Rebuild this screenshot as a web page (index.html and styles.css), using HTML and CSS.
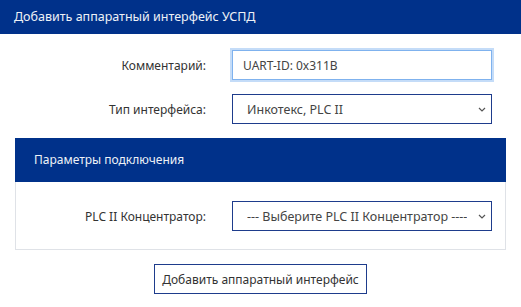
FILE: index.html
```html
<!DOCTYPE html>
<html lang="ru">
<head>
  <meta charset="UTF-8">
  <meta name="viewport" content="width=device-width, initial-scale=1.0">
  <title>Добавить аппаратный интерфейс УСПД</title>
  <link rel="stylesheet" href="styles.css">
</head>
<body>
  <header class="page-header">Добавить аппаратный интерфейс УСПД</header>

  <form class="form">
    <div class="row">
      <label for="comment">Комментарий:</label>
      <input id="comment" class="field field-focus" value="UART-ID: 0x311B">
    </div>

    <div class="row">
      <label for="type">Тип интерфейса:</label>
      <div class="select-wrap">
        <select id="type" class="field">
          <option>Инкотекс, PLC II</option>
        </select>
        <svg class="chevron" width="8" height="5" viewBox="0 0 8 5"><path d="M1 1l3 3 3-3" fill="none" stroke="#555" stroke-width="1.2"/></svg>
      </div>
    </div>

    <div class="panel">
      <div class="panel-title">Параметры подключения</div>
      <div class="panel-body">
        <div class="row row-panel">
          <label for="hub">PLC II Концентратор:</label>
          <div class="select-wrap">
            <select id="hub" class="field">
              <option>--- Выберите PLC II Концентратор ----</option>
            </select>
            <svg class="chevron" width="8" height="5" viewBox="0 0 8 5"><path d="M1 1l3 3 3-3" fill="none" stroke="#555" stroke-width="1.2"/></svg>
          </div>
        </div>
      </div>
    </div>

    <div class="actions">
      <button type="button" class="btn">Добавить аппаратный интерфейс</button>
    </div>
  </form>
</body>
</html>
```

FILE: styles.css
```css
:root {
  --blue: #00318a;
  --text: #333;
  --border: #dfe2e7;
}

body {
  margin: 0;
  font-family: "Noto Sans", "Open Sans", sans-serif;
  font-size: 12px;
  color: var(--text);
  background: white;
}

.page-header {
  background: var(--blue);
  color: #eef1f7;
  height: 34px;
  line-height: 34px;
  padding-left: 14px;
  font-size: 12.5px;
}

.form {
  padding: 16px 0 0;
}

.row {
  display: grid;
  grid-template-columns: 1fr 260px;
  column-gap: 26px;
  align-items: center;
  padding: 0 29px 0 15px;
  margin-bottom: 14px;
}

.row label {
  text-align: right;
  color: #333;
}

.field {
  box-sizing: border-box;
  width: 100%;
  height: 30px;
  font-family: inherit;
  font-size: 12.5px;
  color: #444;
  background: white;
  border: 1px solid #1e3c8c;
  border-radius: 0;
  padding: 0 10px;
  margin: 0;
  outline: none;
}

.field-focus {
  font-size: 12px;
  border: 1px solid #7fb2ee;
  box-shadow: 0 0 0 2px #c4dcf8;
}

.select-wrap {
  position: relative;
}

.select-wrap select {
  appearance: none;
  -webkit-appearance: none;
  padding: 0 24px 0 14px;
}

.chevron {
  position: absolute;
  right: 6px;
  top: 13px;
  pointer-events: none;
}

.panel {
  margin: 12px 15px 0;
  border: 1px solid var(--border);
  border-top: none;
}

.panel-title {
  background: var(--blue);
  color: #eef1f7;
  height: 44px;
  line-height: 44px;
  padding-left: 19px;
  margin: 0 -1px;
}

.panel-body {
  padding: 19px 0 18px;
}

.row-panel {
  padding: 0 13px 0 0;
  margin-bottom: 0;
}

.actions {
  text-align: center;
  padding-top: 14px;
}

.btn {
  font-family: inherit;
  font-size: 12px;
  color: #333;
  background: white;
  border: 1px solid #1e3c8c;
  height: 30px;
  padding: 0 7px;
  cursor: pointer;
}
```
